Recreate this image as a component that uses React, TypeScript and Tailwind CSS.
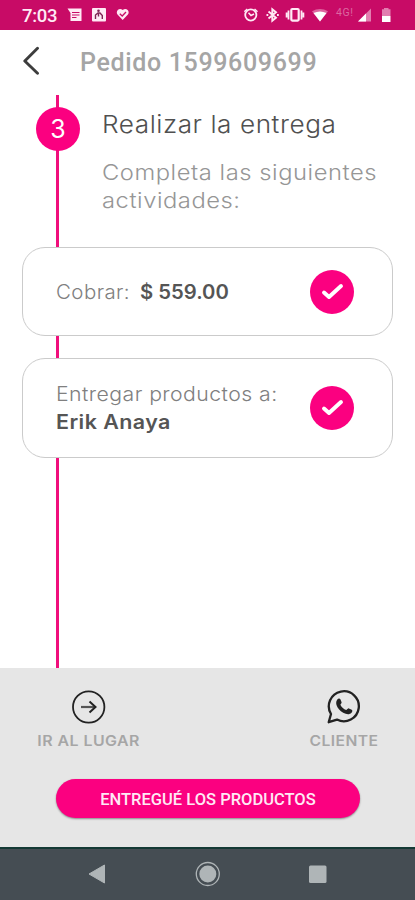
import type { ReactNode } from "react";

function CheckBadge() {
  return (
    <span className="flex size-11 shrink-0 items-center justify-center rounded-full bg-[#fb0080]">
      <svg width="24" height="20" viewBox="0 0 24 20" fill="none" stroke="#fff" strokeWidth="3.9" strokeLinecap="round" strokeLinejoin="round">
        <path d="M4 10.5 9 15 21 4" />
      </svg>
    </span>
  );
}

function StatusBar() {
  return (
    <div className="flex h-[30px] justify-between bg-[#c80b66] pl-[22px] pr-[23px] text-white">
      <div className="flex items-center">
        <span className="w-[45px] whitespace-nowrap pt-px font-['Roboto',sans-serif] text-[18.5px] font-medium leading-[30px] tracking-[-0.3px] text-[#ffeaf5]">7:03</span>
        <svg width="64" height="14" viewBox="0 0 64 14" fill="none">
          <path d="M.5.500H14.500V13H3.500V5z" fill="#ffeaf5" />
          <path d="M5 4.500H12.500M5 7H12.500M5 9.500H9.500" stroke="#c80b66" strokeWidth="1" />
          <rect x="25" y="0" width="14" height="13.500" rx="1" fill="#ffeaf5" />
          <circle cx="31.500" cy="2.800" r="1.300" fill="#7f2454" />
          <path d="M28.500 11V7l2.500-2h2l2.300 2.500V11M31.500 5v3.500" stroke="#7f2454" strokeWidth="1.400" />
          <path d="M55.700 12 50.500 6.600C48.200 3.500 52-.8 55.700 2c3.800-2.800 7.600 1.500 5.200 4.600z" fill="#ffeaf5" />
          <path d="m52.800 5.800 2.400 2.200 3.800-4" stroke="#c80b66" strokeWidth="1.300" />
        </svg>
      </div>
      <svg width="148" height="30" viewBox="0 0 148 30" fill="none" stroke="#ffeaf5">
        <circle cx="6.800" cy="15" r="5.600" strokeWidth="1.800" />
        <path d="M4.500 12.800 7 15.500l3-1.500M.3 11.700 3.300 9M13.500 11.700 10.500 9" strokeWidth="1.500" />
        <path d="m24.500 11.500 7.500 6.300-3.700 3V9.200l3.700 3-7.500 6.300" strokeWidth="1.900" />
        <path d="M22.500 15h1.800M33 15h1.800" strokeWidth="2" />
        <rect x="47.300" y="9" width="7.400" height="11.600" rx="1" strokeWidth="2.200" />
        <path d="M44.500 10.500v9M57.500 10.500v9M42.600 12.500v5M59.400 12.500v5" strokeWidth="1.800" />
        <path d="M68 11.300Q76 6.500 84 11.300L76 21.500z" fill="#ffeaf5" fillOpacity=".4" stroke="none" />
        <path d="M69.500 13q6.500-3 13 0L76 21.500z" fill="#fff" stroke="none" />
        <text x="92" y="15.600" fill="#dc68a1" stroke="none" fontFamily="Roboto, sans-serif" fontSize="10.500" textLength="17">4G!</text>
        <path d="M114 21.500 127 8.500V21.500z" fill="#e27eb0" stroke="none" />
        <path d="M114 21.500l8-8V21.500z" fill="#fff" stroke="none" />
        <path d="M138 9.300h2V8h4.500v1.300h2V16H138z" fill="#e27eb0" stroke="none" />
        <path d="M138 16h8.500v6H138z" fill="#fff" stroke="none" />
      </svg>
    </div>
  );
}

function TaskCard({ children, className }: { children: ReactNode; className: string }) {
  return (
    <div className={"flex items-center justify-between rounded-[23px] border border-[#cbcbcb] bg-white pl-[33px] pr-[38px] font-['Inter',sans-serif] text-[19.5px] leading-[28px] text-[#808080] " + className}>
      {children}
    </div>
  );
}

export default function App() {
  return (
    <div className="flex h-[900px] w-[415px] flex-col overflow-hidden bg-white">
      <StatusBar />
      <header className="flex h-[65px] items-center pl-[23px]">
        <svg className="-mt-[3px]" width="18" height="30" viewBox="0 0 18 30" fill="none" stroke="#3d3d3d" strokeWidth="2.9" strokeLinecap="round" strokeLinejoin="round">
          <path d="M14.500 2.200 1.800 15l12.700 12.300" />
        </svg>
        <h1 className="ml-[39px] whitespace-nowrap font-['Roboto',sans-serif] text-[25px] font-medium leading-[30px] tracking-[0.65px] text-[#a5a5a5]">Pedido 1599609699</h1>
      </header>

      <main className="relative h-[573px] font-['Inter',sans-serif]">
        <div className="absolute left-14 top-0 h-full w-[3px] bg-[#f00f7c]" />
        <section className="relative flex h-[152px]">
          <div className="ml-9 mt-[12px] flex size-11 shrink-0 items-center justify-center rounded-full bg-[#fb0080] pt-[2px] text-[25px] text-white">3</div>
          <div className="ml-[22px] whitespace-nowrap">
            <h2 className="mt-[15px] origin-left scale-x-[1.09] text-[24px] font-light leading-[30px] tracking-[0.5px] text-[#505050]">Realizar la entrega</h2>
            <p className="mt-[18px] origin-left scale-x-[1.08] text-[22px] font-light leading-[28px] tracking-[0.5px] text-[#969696]">
              <span className="block">Completa las siguientes</span>
              <span className="block">actividades:</span>
            </p>
          </div>
        </section>
        <div className="relative flex flex-col gap-[22px] px-[22px]">
          <TaskCard className="h-[89px]">
            <p className="flex whitespace-nowrap">
              <span className="w-[84px] origin-left scale-x-[1.05] font-light tracking-[0.4px]">Cobrar:</span>
              <strong className="origin-left scale-x-[1.04] font-semibold text-[#555]">$ 559.00</strong>
            </p>
            <CheckBadge />
          </TaskCard>
          <TaskCard className="h-[100px]">
            <p className="whitespace-nowrap">
              <span className="block origin-left scale-x-[1.09] font-light tracking-[0.4px]">Entregar productos a:</span>
              <strong className="block origin-left scale-x-[1.1] font-semibold tracking-[0.4px] text-[#555]">Erik Anaya</strong>
            </p>
            <CheckBadge />
          </TaskCard>
        </div>
      </main>

      <footer className="flex h-[179px] flex-col bg-[#e6e6e6]">
        <div className="flex h-[111px] justify-between pl-[38px] pr-[37px] pt-[21px] font-['Inter',sans-serif] text-[14.5px] font-semibold leading-[20px] text-[#a6a6a6]">
          <div className="flex w-[102px] flex-col items-center whitespace-nowrap">
            <svg width="36" height="36" viewBox="0 0 36 36" fill="none" stroke="#222">
              <circle cx="17.700" cy="18" r="15.700" strokeWidth="1.800" />
              <path d="M10 18h14" strokeWidth="2.200" stroke="#555" />
              <path d="m18.500 12.500 6 5.500-6 5.500" strokeWidth="2" />
            </svg>
            <span className="mt-[6px] scale-x-[1.1] tracking-[0.4px]">IR AL LUGAR</span>
          </div>
          <div className="flex w-[69px] flex-col items-center whitespace-nowrap">
            <svg width="36" height="36" viewBox="0 0 36 36" fill="none" stroke="#222">
              <path d="M2.700 33.200 5 25a15 15 0 1 1 6 5.600z" strokeWidth="2.300" strokeLinejoin="round" />
              <path d="M11.500 10.200c1-1.200 2.600-.8 3 .3l1.100 2.700c.3.900-1.400 2-1.100 2.700 1.300 2.500 3.100 4 5.700 5 .8.200 1.800-1.800 2.700-1.500l2.800 1.300c1 .5.7 2-.2 3-2 2.200-5.200 1.700-8.300 0-3.300-1.800-5.800-4.900-6.700-7.700-.7-2.300-.2-4.500 1-5.800z" fill="#222" stroke="none" />
            </svg>
            <span className="mt-[6px] scale-x-[1.08] tracking-[0.4px]">CLIENTE</span>
          </div>
        </div>
        <button className="ml-14 h-[39px] w-[304px] whitespace-nowrap rounded-full bg-[#fb0080] pt-[3px] font-['Roboto',sans-serif] text-[16.5px] font-medium text-[#ffe9f5] shadow-[0_1px_2px_rgba(0,0,0,0.4)]">ENTREGUÉ LOS PRODUCTOS</button>
      </footer>

      <nav className="h-[53px] border-t-2 border-[#143a35] bg-[#454d53]">
        <svg width="415" height="51" viewBox="0 0 415 51">
          <path d="M89 25 104.500 16v18z" fill="#afb5b7" stroke="#afb5b7" strokeLinejoin="round" />
          <circle cx="207.800" cy="25" r="11.500" fill="none" stroke="#afb5b7" strokeWidth="1.300" />
          <circle cx="207.800" cy="25" r="8.500" fill="#afb5b7" />
          <rect x="309" y="16.500" width="17.500" height="17.500" rx="1.500" fill="#afb5b7" />
        </svg>
      </nav>
    </div>
  );
}
